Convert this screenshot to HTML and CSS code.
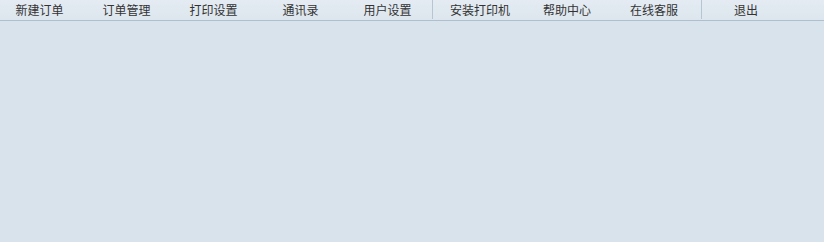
FILE: index.html
```html
<!DOCTYPE html>
<html lang="zh-CN">
<head>
<meta charset="utf-8">
<title>菜单</title>
<link rel="stylesheet" href="styles.css">
</head>
<body>
<nav class="menubar">
  <div class="group group-main">
    <a class="item">新建订单</a>
    <a class="item">订单管理</a>
    <a class="item">打印设置</a>
    <a class="item">通讯录</a>
    <a class="item">用户设置</a>
  </div>
  <div class="group group-help">
    <a class="item">安装打印机</a>
    <a class="item">帮助中心</a>
    <a class="item">在线客服</a>
  </div>
  <div class="group group-exit">
    <a class="item item-exit">退出</a>
  </div>
</nav>
<main class="content"></main>
</body>
</html>
```
FILE: styles.css
```css
html, body {
  margin: 0;
  padding: 0;
  height: 100%;
}
body {
  background: #d9e3ec;
  font-family: "Microsoft YaHei", "Noto Sans CJK SC", "Noto Sans", sans-serif;
  font-size: 12px;
  color: #333;
  overflow: hidden;
}
.menubar {
  display: flex;
  height: 20px;
  background: linear-gradient(#e4ebf2, #dde6ee);
  border-bottom: 1px solid #aebfcf;
}
.group {
  display: flex;
  height: 19px;
}
.group-main {
  margin-left: -4px;
}
.group-help {
  margin-left: 1px;
  border-left: 1px solid #b7c5d3;
  padding-left: 3.5px;
  padding-right: 3px;
}
.group-exit {
  border-left: 1px solid #b7c5d3;
}
.item {
  width: 87px;
  text-align: center;
  line-height: 20px;
  color: #333;
  cursor: pointer;
  white-space: nowrap;
}
.item-exit {
  width: 89px;
}
.content {
  display: block;
}
```
